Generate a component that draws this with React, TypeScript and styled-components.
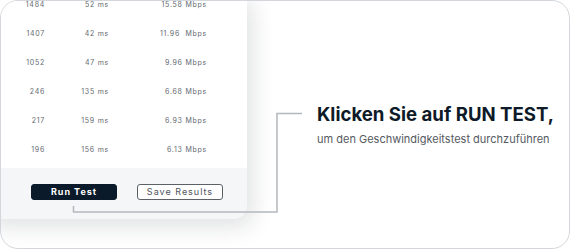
import styled, { createGlobalStyle } from 'styled-components'

const GlobalStyle = createGlobalStyle`
  html, body {
    margin: 0;
    padding: 0;
    background: #ffffff;
  }
  * {
    box-sizing: border-box;
  }
`

const Frame = styled.div`
  position: relative;
  width: 570px;
  height: 249px;
  border: 1px solid #d3d7db;
  border-radius: 18px;
  overflow: hidden;
  background: #ffffff;
  display: flex;
  align-items: flex-start;
  font-family: Inter, 'Noto Sans', sans-serif;
`

const Card = styled.div`
  flex: 0 0 267px;
  margin: -11px 0 0 -21px;
  background: #ffffff;
  border-radius: 14px;
  overflow: hidden;
  box-shadow: 6px 8px 22px rgba(20, 30, 40, 0.13);
`

const Table = styled.div`
  padding-bottom: 4px;
`

const Row = styled.div`
  display: grid;
  grid-template-columns: 65px 64px 98px;
  height: 29px;
  align-items: center;
  font-size: 7px;
  letter-spacing: 0.75px;
  color: #63686f;
`

const Cell = styled.span`
  text-align: right;
  white-space: pre;
`

const Footer = styled.div`
  display: flex;
  gap: 20px;
  height: 51px;
  padding: 16px 0 0 51px;
  background: #f5f6f8;
`

const Button = styled.button<{ $primary?: boolean }>`
  width: 86px;
  height: 16px;
  padding: 0;
  border-radius: 3px;
  font-family: Inter, 'Noto Sans', sans-serif;
  font-size: 9px;
  letter-spacing: 1px;
  font-weight: ${(p) => (p.$primary ? 700 : 400)};
  color: ${(p) => (p.$primary ? '#ffffff' : '#50555c')};
  background: ${(p) => (p.$primary ? '#0b1a2a' : '#ffffff')};
  border: 1px solid ${(p) => (p.$primary ? '#0b1a2a' : '#5c6168')};
  line-height: 14px;
`

const Callout = styled.div`
  margin: 101px 0 0 70px;
`

const Heading = styled.h2`
  margin: 0;
  font-size: 18.6px;
  line-height: 24px;
  font-weight: 700;
  color: #0e1a28;
  white-space: nowrap;
`

const Subline = styled.p`
  margin: 6px 0 0;
  font-size: 11px;
  line-height: 14px;
  color: #555a61;
  white-space: nowrap;
`

const Connector = styled.svg`
  position: absolute;
  left: -1px;
  top: -1px;
  pointer-events: none;
`

const rows = [
  ['1484', '52 ms', '15.58 Mbps'],
  ['1407', '42 ms', '11.96  Mbps'],
  ['1052', '47 ms', '9.96 Mbps'],
  ['246', '135 ms', '6.68 Mbps'],
  ['217', '159 ms', '6.93 Mbps'],
  ['196', '156 ms', '6.13 Mbps'],
]

function App() {
  return (
    <>
      <GlobalStyle />
      <Frame>
        <Card>
          <Table>
            {rows.map((r) => (
              <Row key={r[0]}>
                <Cell>{r[0]}</Cell>
                <Cell>{r[1]}</Cell>
                <Cell>{r[2]}</Cell>
              </Row>
            ))}
          </Table>
          <Footer>
            <Button $primary>Run Test</Button>
            <Button>Save Results</Button>
          </Footer>
        </Card>
        <Callout>
          <Heading>Klicken Sie auf RUN TEST,</Heading>
          <Subline>um den Geschwindigkeitstest durchzuführen</Subline>
        </Callout>
        <Connector width="570" height="250" viewBox="0 0 570 250">
          <path
            d="M 73.5 206 V 212 H 277 V 113.5 H 302"
            fill="none"
            stroke="#b3b8bd"
            strokeWidth="1.5"
          />
        </Connector>
      </Frame>
    </>
  )
}

export default App
